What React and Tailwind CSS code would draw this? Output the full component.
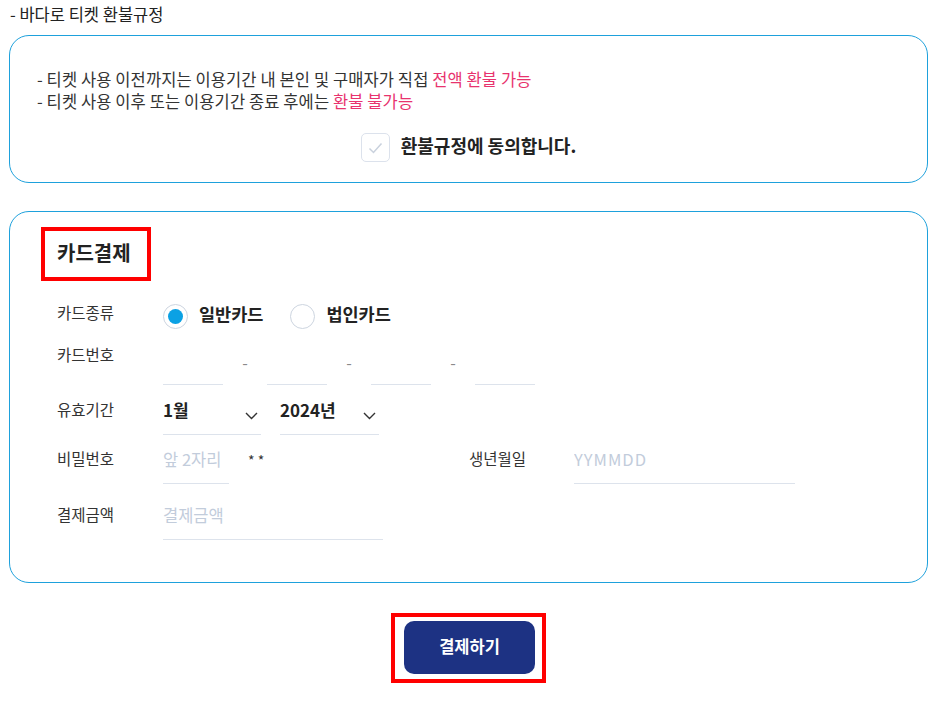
export default function App() {
  const lineInput =
    "h-[44px] border-b border-[#dde3ec] bg-transparent pb-[6px] text-[16.5px] text-[#222] outline-none placeholder:text-[#c2ccdb]";
  const label = "pb-[6px] text-[15.5px] text-[#333]";

  return (
    <div className="min-h-screen bg-white pl-[9px] pr-[16px] pt-[3px] font-['Noto_Sans_CJK_KR','Noto_Sans',sans-serif] text-[#333]">
      <p className="pl-[1px] text-[16.5px] leading-[22px] text-[#222]">- 바다로 티켓 환불규정</p>

      {/* 환불규정 */}
      <section className="mt-[10px] rounded-[20px] border border-[#1ea1dc] px-[27px] pt-[32px] pb-[20px]">
        <p className="text-[16.5px] leading-[22px] tracking-[0.1px]">
          - 티켓 사용 이전까지는 이용기간 내 본인 및 구매자가 직접{" "}
          <span className="text-[#e8336e]">전액 환불 가능</span>
        </p>
        <p className="text-[16.5px] leading-[22px] tracking-[0.1px]">
          - 티켓 사용 이후 또는 이용기간 종료 후에는{" "}
          <span className="text-[#e8336e]">환불 불가능</span>
        </p>
        <label className="mt-[21px] flex items-center justify-center gap-[11px]">
          <span className="flex h-[29px] w-[29px] items-center justify-center rounded-[5px] border-[1.5px] border-[#dce2ec]">
            <svg width="15" height="12" viewBox="0 0 15 12">
              <path d="M1.5 6.5l4 4L13.5 1.5" stroke="#c9d1dd" strokeWidth="1.5" fill="none" />
            </svg>
          </span>
          <span className="pb-[5px] text-[18px] font-bold leading-[24px] text-[#222]">환불규정에 동의합니다.</span>
        </label>
      </section>

      {/* 카드결제 */}
      <section className="mt-[28px] rounded-[20px] border border-[#1ea1dc] pl-[31px] pt-[15px] pb-[42px]">
        <h2 className="inline-block border-4 border-[#ff0000] pt-[9px] pb-[11px] pl-[12px] pr-[16px] text-[20px] font-bold leading-[26px] text-[#222]">
          카드결제
        </h2>

        <div className="pl-[16px]">
          {/* 카드종류 */}
          <div className="mt-[20px] flex h-[30px] items-center">
            <span className={`w-[106px] ${label}`}>카드종류</span>
            <label className="flex items-center gap-[11px]">
              <span className="flex h-[25px] w-[25px] items-center justify-center rounded-full border border-[#cdd5e0]">
                <span className="h-[15px] w-[15px] rounded-full bg-[#0ba1e4]" />
              </span>
              <span className="pb-[3px] text-[17.5px] font-bold text-[#222]">일반카드</span>
            </label>
            <label className="ml-[27px] flex items-center gap-[11px]">
              <span className="h-[25px] w-[25px] rounded-full border border-[#cdd5e0]" />
              <span className="pb-[3px] text-[17.5px] font-bold text-[#222]">법인카드</span>
            </label>
          </div>

          {/* 카드번호 */}
          <div className="mt-[10px] flex items-center">
            <span className="w-[106px] pb-[16px] text-[15.5px]">카드번호</span>
            {[0, 1, 2, 3].map((i) => (
              <div key={i} className="flex items-center">
                <input className={`${lineInput} w-[60px]`} />
                {i < 3 && (
                  <span className="flex w-[44px] justify-center pb-[2px]">
                    <span className="text-[16px] leading-none text-[#8a8a8a]">-</span>
                  </span>
                )}
              </div>
            ))}
          </div>

          {/* 유효기간 */}
          <div className="mt-[5px] flex items-center">
            <span className={`w-[106px] ${label}`}>유효기간</span>
            <div className="relative w-[98px] border-b border-[#dde3ec]">
              <select className="h-[44px] w-full appearance-none bg-transparent pb-[5px] text-[17px] font-bold text-[#222] outline-none">
                <option>1월</option>
              </select>
              <svg className="pointer-events-none absolute right-[3px] top-[22px]" width="13" height="8" viewBox="0 0 13 8">
                <path d="M1 1l5.5 5.5L12 1" stroke="#333" strokeWidth="1.4" fill="none" />
              </svg>
            </div>
            <div className="relative ml-[19px] w-[99px] border-b border-[#dde3ec]">
              <select className="h-[44px] w-full appearance-none bg-transparent pb-[5px] text-[17px] font-bold text-[#222] outline-none">
                <option>2024년</option>
              </select>
              <svg className="pointer-events-none absolute right-[3px] top-[22px]" width="13" height="8" viewBox="0 0 13 8">
                <path d="M1 1l5.5 5.5L12 1" stroke="#333" strokeWidth="1.4" fill="none" />
              </svg>
            </div>
          </div>

          {/* 비밀번호 / 생년월일 */}
          <div className="mt-[5px] flex items-center">
            <span className={`w-[106px] ${label}`}>비밀번호</span>
            <div className="flex w-[306px] items-center">
              <input className={`${lineInput} w-[66px]`} placeholder="앞 2자리" />
              <span className="ml-[19px] pb-[4px] text-[14px] text-[#333]">* *</span>
            </div>
            <span className={`w-[105px] ${label}`}>생년월일</span>
            <input className={`${lineInput} w-[221px] tracking-[1px]`} placeholder="YYMMDD" />
          </div>

          {/* 결제금액 */}
          <div className="mt-[12px] flex items-center">
            <span className={`w-[106px] ${label}`}>결제금액</span>
            <input className={`${lineInput} w-[220px]`} placeholder="결제금액" />
          </div>
        </div>
      </section>

      <div className="mt-[30px] flex justify-center pb-[20px]">
        <div className="border-4 border-[#ff0000] pt-[4px] pb-[5px] pl-[9px] pr-[7px]">
          <button className="h-[53px] w-[131px] rounded-[10px] bg-[#1d3283] pb-[3px] text-[16.5px] font-bold text-white">
            결제하기
          </button>
        </div>
      </div>
    </div>
  );
}
